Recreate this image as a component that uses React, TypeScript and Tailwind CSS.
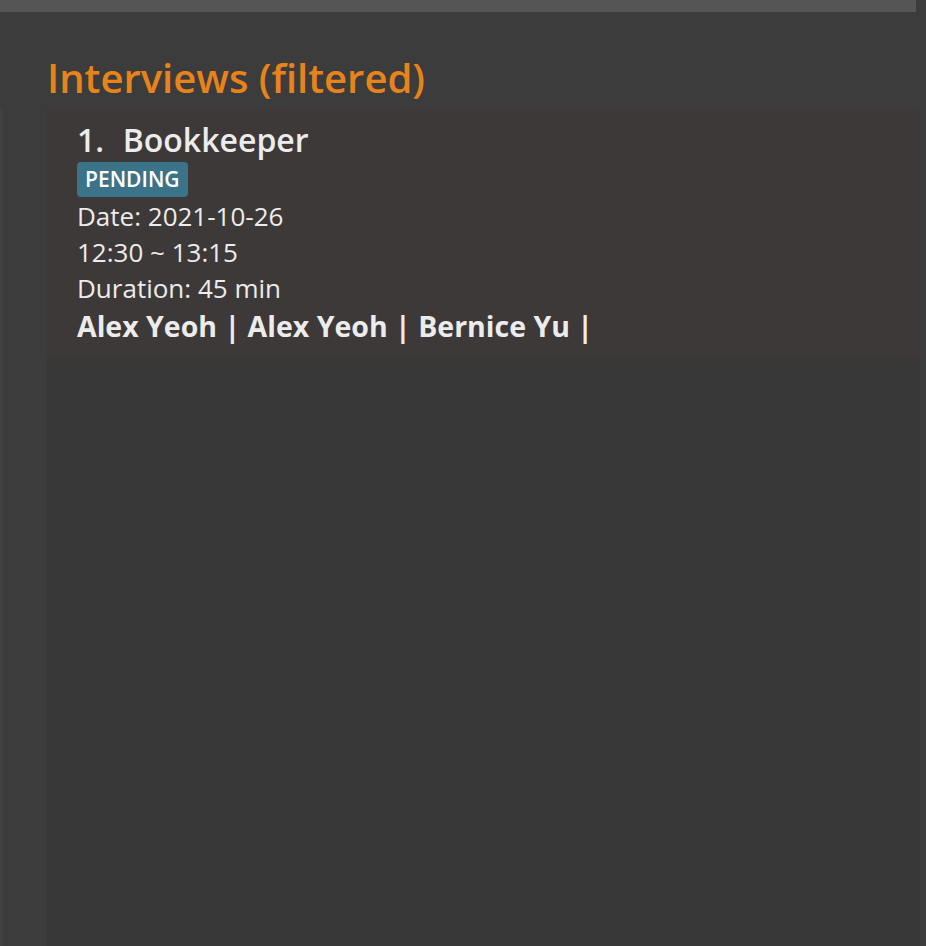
export default function App() {
  const interviews = [
    {
      role: "Bookkeeper",
      status: "PENDING",
      date: "2021-10-26",
      time: "12:30 ~ 13:15",
      duration: "45 min",
      candidates: ["Alex Yeoh", "Alex Yeoh", "Bernice Yu"],
    },
  ];

  return (
    <div className="w-[926px] h-[946px] bg-[#3c3c3c] flex flex-col overflow-hidden font-['Open_Sans',sans-serif]">
      {/* top strip */}
      <div className="h-[12px] w-[916px] bg-[#555555] shrink-0" />

      <div className="pt-[39px] pb-[3px] pl-[47px] shrink-0">
        <h2 className="text-[40px] leading-[54px] font-semibold text-[#e8831c]">
          Interviews (filtered)
        </h2>
      </div>

      <div className="flex flex-1 min-h-0">
        <div className="w-[47px] shrink-0 border-l-[3px] border-[#414141]" />
        <div className="w-[873px] bg-[#383838] flex flex-col">
          {interviews.map((item, index) => (
            <div key={index} className="bg-[#3e3939] pl-[30px] pt-[10px] pb-[11px] text-[#ececec]">
              <div className="text-[32px] leading-[43px] font-semibold whitespace-pre">
                {`${index + 1}.  `}
                <span className="ml-[2px]">{item.role}</span>
              </div>
              <div className="flex">
                <span className="mt-[1px] h-[35px] px-[8px] rounded-[4px] bg-[#3b7388] text-[21px] leading-[35px] font-semibold text-white">
                  {item.status}
                </span>
              </div>
              <div className="mt-[1px] text-[26px] leading-[36px]">
                <div>Date: {item.date}</div>
                <div>{item.time}</div>
                <div>Duration: {item.duration}</div>
              </div>
              <div className="text-[28.5px] leading-[41px] font-bold">
                {item.candidates.map((c) => `${c} | `).join("")}
              </div>
            </div>
          ))}
        </div>
      </div>
    </div>
  );
}
